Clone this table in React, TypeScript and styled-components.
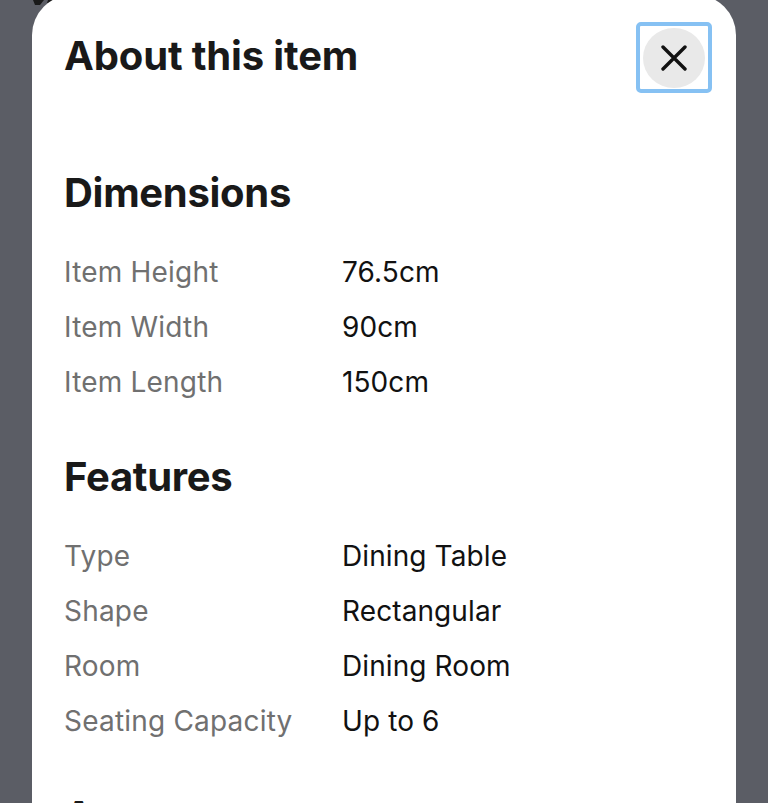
import React from "react";
import styled, { createGlobalStyle } from "styled-components";

const Global = createGlobalStyle`
  html, body { margin: 0; padding: 0; }
  body {
    background: #5b5d65;
    font-family: Inter, "Noto Sans", "Liberation Sans", sans-serif;
    overflow: hidden;
  }
`;

const Backdrop = styled.div`
  position: relative;
  height: 803px;
  overflow: hidden;
  background: #5b5d65;
`;

const BehindGlyph = styled.svg`
  position: absolute;
  left: 28px;
  top: 0;
`;

const Modal = styled.div`
  position: relative;
  margin: -5px 0 0 32px;
  width: 704px;
  min-height: 900px;
  background: #ffffff;
  border-radius: 40px 40px 0 0;
  padding: 27px 24px 0 32px;
  box-sizing: border-box;
`;

const Header = styled.div`
  display: flex;
  justify-content: space-between;
  align-items: flex-start;
  margin-bottom: 76px;
`;

const Title = styled.h2`
  margin: 10px 0 0 0;
  font-size: 40px;
  line-height: 48px;
  font-weight: 700;
  color: #191919;
  letter-spacing: -0.15px;
`;

const CloseRing = styled.button`
  width: 76px;
  height: 71px;
  box-sizing: border-box;
  border: 4px solid #86c1f3;
  border-radius: 5px;
  background: transparent;
  padding: 0;
  display: flex;
  align-items: center;
  justify-content: center;
  cursor: pointer;
`;

const CloseCircle = styled.span`
  width: 62px;
  height: 60px;
  border-radius: 50%;
  background: #e9e9e9;
  display: flex;
  align-items: center;
  justify-content: center;
`;

const Section = styled.section`
  margin-bottom: 43px;
`;

const SectionTitle = styled.h3`
  margin: 0 0 28px 0;
  font-size: 40px;
  line-height: 48px;
  font-weight: 700;
  color: #191919;
  letter-spacing: -0.3px;
`;

const Grid = styled.dl`
  display: grid;
  grid-template-columns: 278px 1fr;
  margin: 0;
`;

const Label = styled.dt`
  font-size: 28px;
  line-height: 55px;
  color: #707070;
  letter-spacing: 0.2px;
  margin: 0;
`;

const Value = styled.dd`
  font-size: 28px;
  line-height: 55px;
  color: #111111;
  letter-spacing: 0.1px;
  margin: 0;
`;

type Row = [string, string];

const sections: { title: string; rows: Row[] }[] = [
  {
    title: "Dimensions",
    rows: [
      ["Item Height", "76.5cm"],
      ["Item Width", "90cm"],
      ["Item Length", "150cm"],
    ],
  },
  {
    title: "Features",
    rows: [
      ["Type", "Dining Table"],
      ["Shape", "Rectangular"],
      ["Room", "Dining Room"],
      ["Seating Capacity", "Up to 6"],
    ],
  },
  {
    title: "Appearance",
    rows: [],
  },
];

export default function App() {
  return (
    <>
      <Global />
      <Backdrop>
        <BehindGlyph width="40" height="10" viewBox="0 0 40 10">
          <path d="M5 0 L16 0 L12 5 L7 5 Z" fill="#1a1a1a" />
          <path d="M20 0 L27 0 L24 3 L19 3 Z" fill="#1a1a1a" />
        </BehindGlyph>
        <Modal>
          <Header>
            <Title>About this item</Title>
            <CloseRing aria-label="Close">
              <CloseCircle>
                <svg width="26" height="26" viewBox="0 0 26 26">
                  <path
                    d="M2 2 L24 24 M24 2 L2 24"
                    stroke="#111111"
                    strokeWidth="3.4"
                    strokeLinecap="round"
                  />
                </svg>
              </CloseCircle>
            </CloseRing>
          </Header>
          {sections.map((s) => (
            <Section key={s.title}>
              <SectionTitle>{s.title}</SectionTitle>
              {s.rows.length > 0 && (
                <Grid>
                  {s.rows.map(([l, v]) => (
                    <React.Fragment key={l}>
                      <Label>{l}</Label>
                      <Value>{v}</Value>
                    </React.Fragment>
                  ))}
                </Grid>
              )}
            </Section>
          ))}
        </Modal>
      </Backdrop>
    </>
  );
}
